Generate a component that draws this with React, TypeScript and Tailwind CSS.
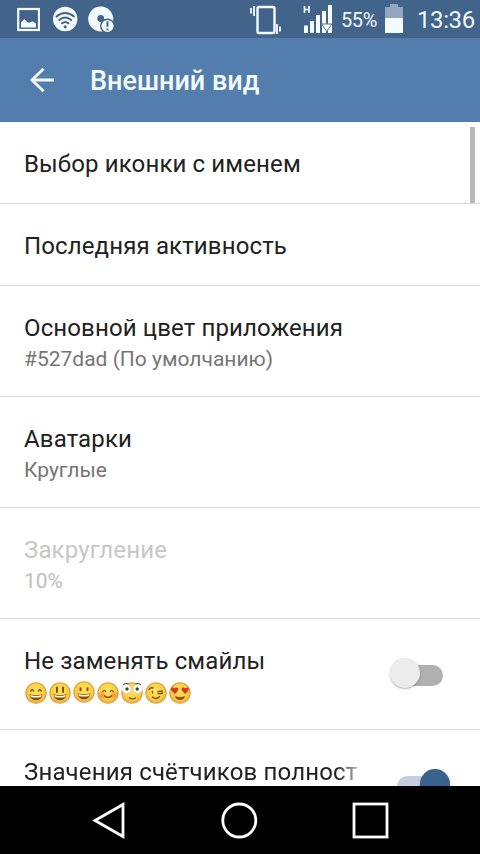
import React from 'react';
import { useState } from 'react';

function StatusBar() {
  return (
    <div className="h-[38px] shrink-0 flex items-center bg-[#43648a] text-[#eef8ff]">
      <svg className="ml-[17px] shrink-0" width="23" height="38" viewBox="0 0 23 38">
        <rect x="1.2" y="9" width="20.8" height="21" fill="none" stroke="#f4fbff" strokeWidth="2.2" />
        <path d="M4 27.5v-5l2-2.3 1.5-1 3 3 2 .6 3-1.5 3.5 2.2v4z" fill="#f4fbff" />
      </svg>
      <svg className="ml-[13px] shrink-0" width="25" height="38" viewBox="0 0 25 38">
        <circle cx="12.2" cy="19" r="12.2" fill="#f4fbff" />
        <g fill="none" stroke="#43648a" strokeWidth="2" strokeLinecap="round">
          <path d="M3.5 16.5Q12.2 9.5 21 16.5" />
          <path d="M6.3 20Q12.2 15 18.2 20" />
          <path d="M9 23.3Q12.2 20.6 15.4 23.3" />
        </g>
        <circle cx="12.2" cy="26.8" r="1.6" fill="#43648a" />
      </svg>
      <svg className="ml-[10px] shrink-0" width="28" height="38" viewBox="0 0 28 38">
        <circle cx="12.7" cy="19" r="12.5" fill="#f4fbff" />
        <circle cx="12.7" cy="18.5" r="3.4" fill="#43648a" />
        <circle cx="19.5" cy="26" r="6.8" fill="#f4fbff" stroke="#43648a" strokeWidth="1.4" />
        <path d="M19.5 21.5v5.3M19.5 28.4v2" stroke="#43648a" strokeWidth="2" />
      </svg>

      <svg className="ml-[134px] shrink-0" width="32" height="38" viewBox="0 0 32 38">
        <rect x="7.5" y="7" width="17" height="26" rx="1.5" fill="none" stroke="#f4fbff" strokeWidth="2.4" />
        <path d="M1 8v5.5M4 6v10M27 24v10M30 26.5v5" stroke="#f4fbff" strokeWidth="1.8" />
      </svg>
      <svg className="ml-[21px] shrink-0" width="29" height="38" viewBox="0 0 29 38">
        <path d="M1.5 6v7M6 6v7M1.5 9.5H6" stroke="#f4fbff" strokeWidth="1.7" />
        <path d="M1 25.5h4V33H1zM7 21h4v12H7zM13 15h4v18h-4zM19 11h4v22h-4zM25 5h4v28h-4z" fill="#f4fbff" />
        <path d="M18.6 24h10.2l-5.1 7.5z" fill="#f4fbff" stroke="#6a7687" strokeWidth="1" />
      </svg>
      <span className="ml-[9px] w-[37px] text-[20px] leading-none whitespace-nowrap tracking-[-0.4px] mt-[2px]">55%</span>
      <svg className="ml-[7px] shrink-0" width="18" height="38" viewBox="0 0 18 38">
        <path d="M5 4h8v3h5v11H0V7h5z" fill="#94a7c1" />
        <path d="M0 18h18v15H0z" fill="#f4fbff" />
      </svg>
      <span className="ml-[14px] text-[24px] leading-none whitespace-nowrap tracking-[-0.4px] mt-[2px]">13:36</span>
    </div>
  );
}

type EmojiKind = 'smile' | 'open' | 'grin' | 'blush' | 'flushed' | 'wink' | 'love';

const emojis: EmojiKind[] = ['smile', 'open', 'grin', 'blush', 'flushed', 'wink', 'love'];

function Emoji({ kind }: { kind: EmojiKind }) {
  const laughing = kind === 'smile' || kind === 'open' || kind === 'grin';
  return (
    <svg
      className={kind === 'grin' ? 'overflow-visible -translate-y-px' : 'overflow-visible'}
      width="22"
      height="22"
      viewBox="0 0 22 22"
    >
      <circle cx="11" cy="11" r="10.2" fill="url(#face)" stroke="#dda044" strokeWidth="1.1" />
      {laughing && (
        <path d="M4.5 12.2Q11 14.5 17.5 12.2Q16.5 18.2 11 18.2Q5.5 18.2 4.5 12.2z" fill="#8a4b12" />
      )}
      {laughing && <path d="M5.3 13Q11 15 16.7 13L16 15Q11 16.2 6 15z" fill="#fffdf2" />}
      {kind === 'smile' && (
        <path d="M5.5 9.5Q7.2 6 9 9.5M13 9.5Q14.8 6 16.5 9.5" fill="none" stroke="#80501c" strokeWidth="1.4" />
      )}
      {kind === 'open' && (
        <path d="M8 5.5v4.5M14 5.5v4.5" stroke="#80501c" strokeWidth="2" strokeLinecap="round" />
      )}
      {kind === 'grin' && (
        <path d="M7.5 7.2v2M14.5 7.2v2" stroke="#80501c" strokeWidth="2" strokeLinecap="round" />
      )}
      {kind === 'blush' && (
        <>
          <circle cx="4.8" cy="13.2" r="3" fill="#fb9142" opacity="0.75" />
          <circle cx="17.2" cy="13.2" r="3" fill="#fb9142" opacity="0.75" />
          <path
            d="M5.5 9.8Q7.3 7 9 9.8M13 9.8Q14.8 7 16.5 9.8M7 13.5Q11 17.5 15 13.5"
            fill="none"
            stroke="#80501c"
            strokeWidth="1.4"
          />
        </>
      )}
      {kind === 'flushed' && (
        <>
          <circle cx="5.5" cy="6.8" r="4.7" fill="#fff" stroke="#c9b79b" strokeWidth="0.5" />
          <circle cx="16.8" cy="6.8" r="4.7" fill="#fff" stroke="#c9b79b" strokeWidth="0.5" />
          <circle cx="6" cy="7" r="1.7" fill="#34424a" />
          <circle cx="16.2" cy="7" r="1.7" fill="#34424a" />
          <path d="M2 2.6Q4.5 .5 7.5 2M14.5 2Q17.5 .5 20 2.6" fill="none" stroke="#62401e" strokeWidth="1" />
          <path d="M8 15.5Q11.5 18.2 15 15.5" fill="none" stroke="#80501c" strokeWidth="1.4" />
        </>
      )}
      {kind === 'wink' && (
        <path
          d="M4 7.5Q5.5 5 8 6M7.5 9.5v1.5M13 9.5L17.5 9M13 11.3Q15 12.2 17.5 11M7.5 15Q11 18 14.5 14.8"
          fill="none"
          stroke="#80501c"
          strokeWidth="1.4"
          strokeLinecap="round"
        />
      )}
      {kind === 'love' && (
        <>
          <path
            d="M6 12L2.2 8.2Q1.4 5.5 3.8 5.2L5.7 6.5Q7.5 4.5 9.3 6.2Q10 8 6 12zM16 12L12.7 8.2Q11.8 5.8 14.2 5.2L16.2 6.5Q18.3 4.5 19.8 6.2Q20.4 8 16 12z"
            fill="#dc3728"
          />
          <path d="M6 14Q11 15.8 16 14Q15.3 18 11 18Q6.7 18 6 14z" fill="#934f12" />
        </>
      )}
    </svg>
  );
}

function EmojiRow() {
  return (
    <div className="flex gap-[2px] pt-[5px] pl-[1px]">
      {emojis.map((kind) => (
        <Emoji key={kind} kind={kind} />
      ))}
    </div>
  );
}

interface RowProps {
  title: string;
  subtitle?: string;
  disabled?: boolean;
}

function Row({ title, subtitle, disabled }: RowProps) {
  return (
    <div className={`px-6 pt-[26px] border-b border-[#d9d9d9] ${subtitle ? 'h-[111px]' : 'h-[82px]'}`}>
      <div
        className={`text-[24px] leading-[32px] tracking-[0.13px] whitespace-nowrap ${
          disabled ? 'text-[#c7c7c7]' : 'text-[#212121]'
        }`}
      >
        {title}
      </div>
      {subtitle && (
        <div className={`text-[21px] leading-[30px] ${disabled ? 'text-[#bdbdbd]' : 'text-[#757575]'}`}>{subtitle}</div>
      )}
    </div>
  );
}

function Switch({ checked, onChange }: { checked: boolean; onChange: () => void }) {
  return (
    <button
      type="button"
      role="switch"
      aria-checked={checked}
      onClick={onChange}
      className={`w-[54px] h-8 flex items-center shrink-0 ${checked ? 'justify-end' : 'justify-start'}`}
    >
      <span
        className={`w-[46px] h-[21px] mt-[2px] rounded-full flex items-center ${
          checked ? 'bg-[#c3cede] justify-end mr-[8px]' : 'bg-[#b0b0b0] justify-start ml-[8px]'
        }`}
      >
        <span
          className={`size-[30px] mb-[4px] rounded-full shrink-0 shadow-[0_1px_2px_rgba(0,0,0,0.3)] ${
            checked ? 'bg-[#39618f] -mr-[7px]' : 'bg-[#ececec] -ml-[7px]'
          }`}
        />
      </span>
    </button>
  );
}

export default function App() {
  const [keepEmoji, setKeepEmoji] = useState(false);
  const [fullCounters, setFullCounters] = useState(true);

  return (
    <div className="w-[480px] h-[854px] flex flex-col overflow-hidden bg-white font-['Roboto','Noto_Sans',sans-serif]">
      <svg width="0" height="0" className="absolute">
        <defs>
          <radialGradient id="face" cx="50%" cy="40%" r="60%">
            <stop offset="0" stopColor="#ffe45c" />
            <stop offset="0.65" stopColor="#fbcf42" />
            <stop offset="1" stopColor="#efb044" />
          </radialGradient>
        </defs>
      </svg>

      <StatusBar />

      <header className="h-[84px] shrink-0 flex items-center bg-[#527dad] text-[#f4fbff]">
        <svg className="ml-[30px]" width="25" height="26" viewBox="0 0 25 26" fill="none" stroke="currentColor" strokeWidth="2.9">
          <path d="M24 13H2.5M13.5 1.8L2 13l11.5 11.2" />
        </svg>
        <h1 className="ml-[35px] text-[27px] leading-8 font-medium whitespace-nowrap mt-[2px]">Внешний вид</h1>
      </header>

      <main className="relative flex-1 min-h-0 overflow-hidden">
        <Row title="Выбор иконки с именем" />
        <Row title="Последняя активность" />
        <Row title="Основной цвет приложения" subtitle="#527dad (По умолчанию)" />
        <Row title="Аватарки" subtitle="Круглые" />
        <Row title="Закругление" subtitle="10%" disabled />

        <div className="h-[111px] flex items-start border-b border-[#d9d9d9] pl-6 pr-[37px] pt-[26px]">
          <div className="flex-1">
            <div className="text-[24px] leading-[32px] tracking-[0.13px] text-[#212121]">Не заменять смайлы</div>
            <EmojiRow />
          </div>
          <div className="pt-[13px]">
            <Switch checked={keepEmoji} onChange={() => setKeepEmoji(!keepEmoji)} />
          </div>
        </div>

        <div className="flex items-start pl-6 pr-[29px] pt-[28px]">
          <div className="w-[338px] mr-[35px] text-[24px] leading-[28px] tracking-[0.16px] whitespace-nowrap text-[#212121] [mask-image:linear-gradient(to_right,#000_312px,transparent_345px)]">
            Значения счётчиков полност
          </div>
          <div className="pt-[11px]">
            <Switch checked={fullCounters} onChange={() => setFullCounters(!fullCounters)} />
          </div>
        </div>

        <div className="absolute right-[5px] top-[5px] w-[5px] h-[76px] bg-[#b7b7b7]" />
      </main>

      <nav className="h-[68px] shrink-0 flex items-center bg-black pl-[92px] gap-[94px]">
        <svg width="34" height="40" viewBox="0 0 34 40" fill="none" stroke="#fff" strokeWidth="2.8">
          <path d="M31 4.5v32L3 20.5z" />
        </svg>
        <svg width="38" height="40" viewBox="0 0 38 40" fill="none" stroke="#fff" strokeWidth="2.8">
          <circle cx="19.3" cy="20.5" r="16.5" />
        </svg>
        <svg width="38" height="40" viewBox="0 0 38 40" fill="none" stroke="#fff" strokeWidth="2.8">
          <rect x="2" y="4" width="33" height="33" />
        </svg>
      </nav>
    </div>
  );
}
